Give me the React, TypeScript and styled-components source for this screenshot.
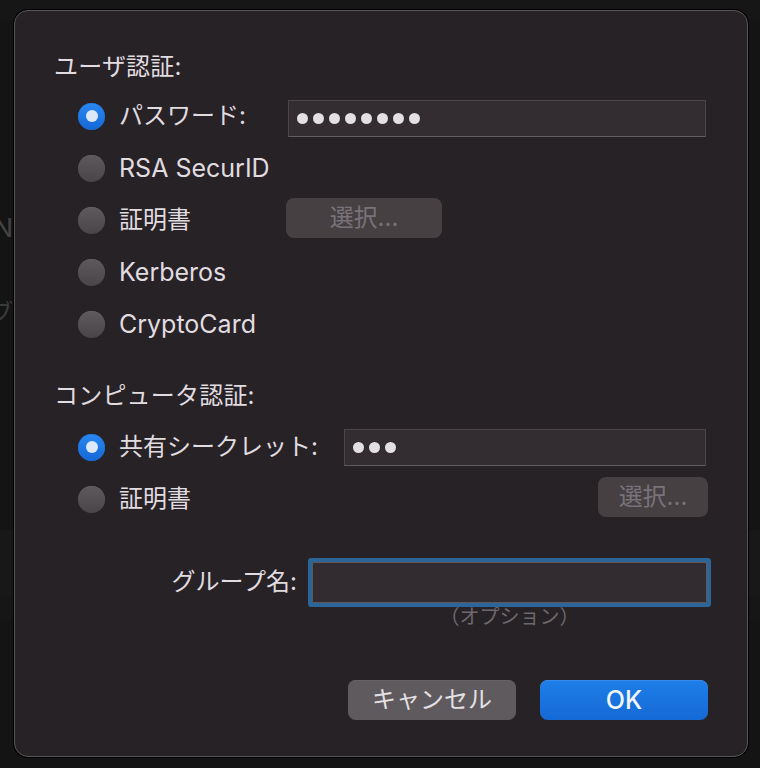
import React from "react";
import styled, { createGlobalStyle } from "styled-components";

const Global = createGlobalStyle`
  html, body { margin: 0; padding: 0; background: #141414; }
  body {
    width: 760px; height: 768px; overflow: hidden;
    font-family: Inter, "Noto Sans CJK JP", "Noto Sans", sans-serif;
    -webkit-font-smoothing: antialiased;
  }
  * { box-sizing: border-box; }
`;

const Stage = styled.div`
  position: relative;
  width: 760px;
  height: 768px;
  overflow: hidden;
  background: #141414;
`;

/* ---------- window behind the sheet ---------- */
const Backdrop = styled.div`
  display: flex;
  flex-direction: column;
  width: 100%;
  height: 100%;
`;

const BackBand = styled.div<{ $h: number; $bg?: string; $line?: boolean }>`
  height: ${(p) => p.$h}px;
  flex: none;
  background: ${(p) => p.$bg || "transparent"};
  border-bottom: ${(p) => (p.$line ? "1px solid #1a1a1a" : "none")};
  display: flex;
  align-items: center;
`;

const BackClip = styled.div`
  width: 13px;
  overflow: hidden;
  display: flex;
  justify-content: flex-end;
  white-space: nowrap;
`;

const BackText = styled.span<{ $size: number; $color: string }>`
  font-size: ${(p) => p.$size}px;
  color: ${(p) => p.$color};
  line-height: 1;
`;

/* ---------- sheet ---------- */
const Dialog = styled.div`
  position: absolute;
  left: 14px;
  top: 10px;
  width: 734px;
  height: 747px;
  background: #272226;
  border: 1px solid #5a5558;
  border-radius: 14px;
  box-shadow: 0 0 0 1px #000;
  padding: 36px 40px 0 39px;
  display: flex;
  flex-direction: column;
  color: #e0dce0;
  font-size: 24px;
`;

const SectionTitle = styled.div<{ $gap?: number; $after: number }>`
  height: 40px;
  line-height: 40px;
  margin-top: ${(p) => p.$gap || 0}px;
  margin-bottom: ${(p) => p.$after}px;
  letter-spacing: 0.2px;
`;

const RadioRow = styled.div<{ $labelWidth: number }>`
  height: 52px;
  margin-left: 24px;
  display: grid;
  grid-template-columns: ${(p) => p.$labelWidth}px 1fr;
  align-items: center;
`;

const RadioLabel = styled.label`
  display: flex;
  align-items: center;
  gap: 14px;
  line-height: 32px;
  white-space: nowrap;
`;

const Latin = styled.span`
  font-size: 25px;
`;

const RadioDot = styled.span<{ $on?: boolean }>`
  width: 27px;
  height: 27px;
  border-radius: 50%;
  flex: none;
  display: flex;
  align-items: center;
  justify-content: center;
  background: ${(p) =>
    p.$on
      ? "linear-gradient(#2a89f2, #1467d6)"
      : "linear-gradient(#5e595c, #4a4548)"};
  box-shadow: ${(p) =>
    p.$on ? "inset 0 0 0 0.5px #1e6fd0" : "inset 0 0.5px 0 #6a6568"};

  &::after {
    content: "";
    display: ${(p) => (p.$on ? "block" : "none")};
    width: 12px;
    height: 12px;
    border-radius: 50%;
    background: #dde9f8;
  }
`;

const SecureField = styled.div<{ $drop?: number }>`
  height: 37px;
  margin-top: ${(p) => p.$drop || 0}px;
  margin-right: 1px;
  background: #332d31;
  border: 1px solid #4b464a;
  border-bottom-color: #625d61;
  display: flex;
  align-items: center;
  gap: 5px;
  padding-left: 8px;
`;

const Bullet = styled.span`
  width: 11px;
  height: 11px;
  border-radius: 50%;
  background: #e2e0e2;
`;

const ChooseButton = styled.button<{ $width: number; $end?: boolean }>`
  width: ${(p) => p.$width}px;
  height: 40px;
  justify-self: ${(p) => (p.$end ? "end" : "start")};
  margin-right: ${(p) => (p.$end ? "-1px" : "0")};
  margin-bottom: 4px;
  border: none;
  border-radius: 8px;
  background: #464042;
  color: #78737a;
  font: inherit;
  font-size: 24px;
  line-height: 40px;
  padding: 0;
  text-align: center;
`;

const FormGrid = styled.div<{ $gap?: number; $h: number }>`
  display: grid;
  grid-template-columns: 1fr 395px;
  column-gap: 15px;
  align-items: center;
  height: ${(p) => p.$h}px;
  margin-top: ${(p) => p.$gap || 0}px;
`;

const FieldLabel = styled.div`
  text-align: right;
  white-space: nowrap;
  line-height: 32px;
`;

const FocusField = styled.div`
  height: 41px;
  background: #322c30;
  border: 1px solid #5d585c;
  border-radius: 1px;
  box-shadow: 0 0 0 4px #2c6598;
`;

const OptionNote = styled.div`
  grid-column: 2;
  text-align: center;
  font-size: 20px;
  line-height: 22px;
  color: #6d686c;
`;

const ButtonBar = styled.div`
  margin-top: 52px;
  margin-right: -1px;
  display: flex;
  justify-content: flex-end;
  gap: 24px;
`;

const PushButton = styled.button<{ $primary?: boolean }>`
  width: 168px;
  height: 40px;
  border: none;
  border-radius: 8px;
  padding: 0;
  font: inherit;
  font-size: ${(p) => (p.$primary ? 25 : 24)}px;
  line-height: 40px;
  font-weight: ${(p) => (p.$primary ? 500 : 400)};
  color: ${(p) => (p.$primary ? "#f2f6fc" : "#e4e1e4")};
  background: ${(p) =>
    p.$primary ? "linear-gradient(#1e7ee8, #1569d6)" : "#5f5a5d"};
  box-shadow: ${(p) =>
    p.$primary ? "inset 0 0.5px 0 #4d9af0" : "inset 0 0.5px 0 #6e696c"};
`;

const Dots = ({ n }: { n: number }) => (
  <>
    {Array.from({ length: n }).map((_, i) => (
      <Bullet key={i} />
    ))}
  </>
);

export default function App() {
  return (
    <Stage>
      <Global />
      <Backdrop>
        <BackBand $h={20} $bg="#161616" />
        <BackBand $h={180} />
        <BackBand $h={56}>
          <BackClip>
            <BackText $size={26} $color="#444">N</BackText>
          </BackClip>
        </BackBand>
        <BackBand $h={114}>
          <BackClip>
            <BackText $size={24} $color="#3a3a3a">ブ</BackText>
          </BackClip>
        </BackBand>
        <BackBand $h={160} />
        <BackBand $h={65} $bg="#181818" />
        <BackBand $h={25} $bg="#161616" />
      </Backdrop>

      <Dialog>
        <SectionTitle $after={3}>ユーザ認証:</SectionTitle>

        <RadioRow $labelWidth={210}>
          <RadioLabel>
            <RadioDot $on />
            パスワード:
          </RadioLabel>
          <SecureField $drop={5}>
            <Dots n={8} />
          </SecureField>
        </RadioRow>

        <RadioRow $labelWidth={210}>
          <RadioLabel>
            <RadioDot />
            <Latin>RSA SecurID</Latin>
          </RadioLabel>
        </RadioRow>

        <RadioRow $labelWidth={208}>
          <RadioLabel>
            <RadioDot />
            証明書
          </RadioLabel>
          <ChooseButton $width={156}>選択...</ChooseButton>
        </RadioRow>

        <RadioRow $labelWidth={210}>
          <RadioLabel>
            <RadioDot />
            <Latin>Kerberos</Latin>
          </RadioLabel>
        </RadioRow>

        <RadioRow $labelWidth={210}>
          <RadioLabel>
            <RadioDot />
            <Latin>CryptoCard</Latin>
          </RadioLabel>
        </RadioRow>

        <SectionTitle $gap={26} $after={5}>
          コンピュータ認証:
        </SectionTitle>

        <RadioRow $labelWidth={266}>
          <RadioLabel>
            <RadioDot $on />
            共有シークレット:
          </RadioLabel>
          <SecureField>
            <Dots n={3} />
          </SecureField>
        </RadioRow>

        <RadioRow $labelWidth={266}>
          <RadioLabel>
            <RadioDot />
            証明書
          </RadioLabel>
          <ChooseButton $width={110} $end>
            選択...
          </ChooseButton>
        </RadioRow>

        <FormGrid $gap={33} $h={48}>
          <FieldLabel>グループ名:</FieldLabel>
          <FocusField />
        </FormGrid>
        <FormGrid $h={22}>
          <OptionNote>（オプション）</OptionNote>
        </FormGrid>

        <ButtonBar>
          <PushButton>キャンセル</PushButton>
          <PushButton $primary>OK</PushButton>
        </ButtonBar>
      </Dialog>
    </Stage>
  );
}
